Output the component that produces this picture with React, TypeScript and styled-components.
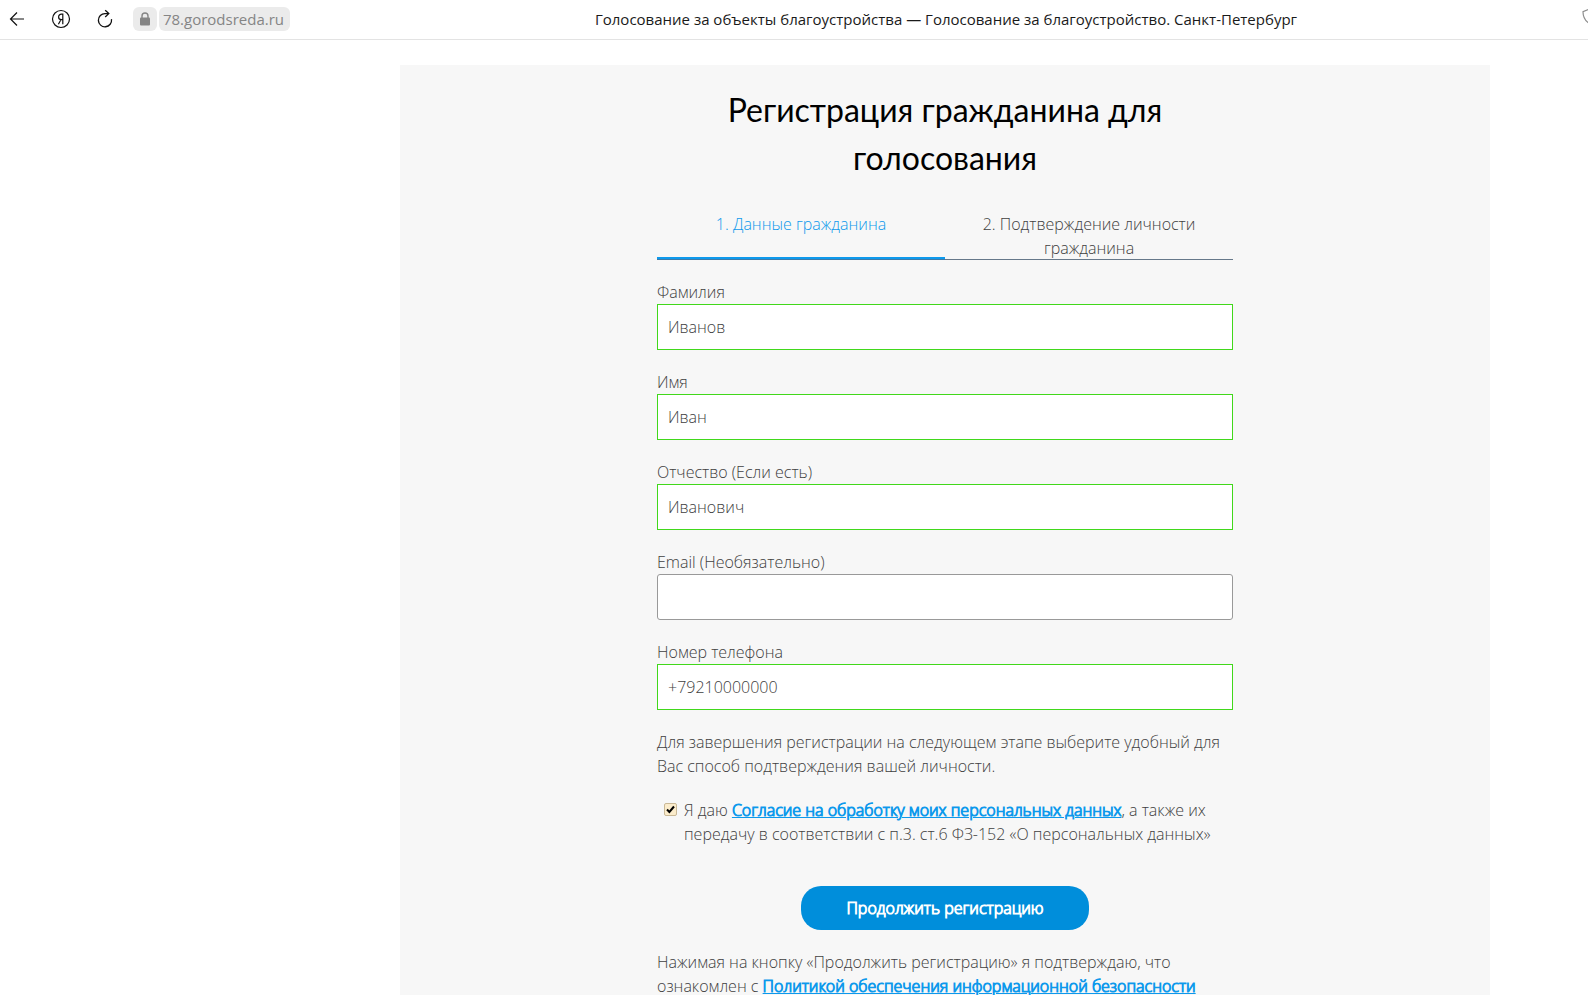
import React, { useState } from 'react';
import styled, { createGlobalStyle } from 'styled-components';

const GlobalStyle = createGlobalStyle`
  *, *::before, *::after { box-sizing: border-box; }
  body {
    margin: 0;
    background: #fff;
    color: #404040;
    font: 300 16px/24px "Open Sans", "Noto Sans", sans-serif;
  }
`;

const Page = styled.div`
  display: flex;
  flex-direction: column;
  height: 100vh;
`;

const Toolbar = styled.header`
  display: flex;
  align-items: center;
  flex: none;
  height: 40px;
  padding-left: 4px;
  padding-bottom: 1px;
  border-bottom: 1px solid #e3e3e3;
`;

const NavButtons = styled.nav`
  display: flex;
  gap: 18px;
`;

const IconButton = styled.button`
  display: flex;
  align-items: center;
  justify-content: center;
  width: 26px;
  height: 26px;
  padding: 0;
  border: 0;
  background: none;
  color: #111;
`;

const Address = styled.div`
  display: flex;
  gap: 2px;
  margin-left: 15px;
`;

const LockChip = styled.button`
  display: flex;
  align-items: center;
  justify-content: center;
  width: 24px;
  height: 24px;
  padding: 0;
  border: 0;
  border-radius: 6px;
  background: #ebebeb;
  color: #858585;
`;

const UrlChip = styled.button`
  width: 131px;
  height: 24px;
  padding: 0 2px 0 0;
  border: 0;
  border-radius: 6px;
  background: #ebebeb;
  color: #858585;
  font: 400 15px/24px "Open Sans", "Noto Sans", sans-serif;
`;

const PageTitle = styled.div`
  flex: 1;
  margin-left: 20px;
  color: #1a1a1a;
  font-size: 15px;
  font-weight: 400;
  text-align: center;
  white-space: nowrap;
`;

const ShieldEdge = styled.div`
  flex: none;
  width: 6px;
  height: 24px;
  overflow: hidden;
  color: #8c8c8c;

  svg {
    display: block;
  }
`;

const Content = styled.div`
  flex: 1;
  min-height: 0;
  overflow-y: auto;
  scrollbar-width: none;
  padding: 25px 98px 0 400px;
`;

const Panel = styled.main`
  min-height: 100%;
  padding: 21px 20px 40px;
  background: #f7f7f7;
`;

const Form = styled.form`
  display: flex;
  flex-direction: column;
  gap: 20px;
  max-width: 576px;
  margin: 0 auto;
`;

const Heading = styled.h1`
  margin: 0 0 10px;
  color: #000;
  font: 400 32px/48px Lato, sans-serif;
  text-align: center;
`;

const Steps = styled.ol`
  display: flex;
  margin: 0;
  padding: 0;
  list-style: none;
  box-shadow: inset 0 -1px #66788a;
`;

const Step = styled.li<{ $active?: boolean }>`
  flex: 1;
  padding: 0 30px;
  color: ${p => (p.$active ? '#0d99ec' : '#404040')};
  text-align: center;
  box-shadow: ${p => (p.$active ? 'inset 0 -1px #3c7ba8, inset 0 -3px #0d99ec' : 'none')};
`;

const Field = styled.label`
  display: block;
`;

const TextInput = styled.input<{ $valid?: boolean }>`
  display: block;
  width: 100%;
  height: 46px;
  padding: 0 10px;
  border: 1px solid ${p => (p.$valid ? '#41d81b' : '#999')};
  border-radius: ${p => (p.$valid ? 0 : 3)}px;
  outline: 0;
  background: #fff;
  color: #404040;
  font: inherit;
`;

const Text = styled.p`
  margin: 0;
`;

const Consent = styled.div`
  display: flex;
  gap: 7px;
  padding-left: 7px;
`;

const Checkbox = styled.input`
  flex: none;
  appearance: none;
  width: 13px;
  height: 13px;
  margin: 5px 0 0;
  border: 1px solid #c9b896;
  border-radius: 2px;
  background: #fbeccb;

  &:checked {
    background: #fbeccb
      url("data:image/svg+xml,%3Csvg xmlns='http://www.w3.org/2000/svg' viewBox='0 0 11 11'%3E%3Cpath d='M2 5.5 4.4 8 9 2.5' fill='none' stroke='%23000' stroke-width='2'/%3E%3C/svg%3E");
  }
`;

const Link = styled.a`
  color: #0d99ec;
  text-decoration: underline;
  -webkit-text-stroke: 1px;
`;

const Submit = styled.button`
  align-self: center;
  width: 50%;
  height: 44px;
  margin-top: 20px;
  border: 0;
  border-radius: 20px;
  background: #008edb;
  color: #fff;
  font: inherit;
  -webkit-text-stroke: 1px;
`;

const BackIcon = () => (
  <svg width="16" height="16" viewBox="0 0 16 16" fill="none" stroke="currentColor" strokeWidth="1.2">
    <path d="M15 8H1.5M8 1.5 1.5 8 8 14.5" />
  </svg>
);

const YandexIcon = () => (
  <svg width="20" height="20" viewBox="0 0 20 20" fill="none" stroke="currentColor">
    <circle cx="10" cy="10" r="8.5" strokeWidth="1.2" />
    <path d="M11.8 15.2V5.2H10.4C8.7 5.2 7.6 6.3 7.6 8S8.7 10.7 10.4 10.7H11.8M9.9 10.7 7.4 15.2" strokeWidth="1.2" />
  </svg>
);

const ReloadIcon = () => (
  <svg width="18" height="20" viewBox="0 0 18 20" fill="none" stroke="currentColor" strokeWidth="1.3">
    <path d="M15.5 10.2A6.6 6.6 0 1 1 9.2 4.6H12.4M9.2 1.2 12.8 4.6 9.2 8" />
  </svg>
);

const LockIcon = () => (
  <svg width="12" height="14" viewBox="0 0 12 14">
    <path d="M3 6.500V4A3 3 0 0 1 9 4V6.500" fill="none" stroke="currentColor" strokeWidth="1.4" />
    <rect x="1" y="5.500" width="10" height="8" rx="1" fill="currentColor" />
  </svg>
);

const ShieldIcon = () => (
  <svg width="18" height="20" viewBox="0 0 18 20" fill="none" stroke="currentColor" strokeWidth="1.2">
    <path d="M9 1.500 1 4.700C1 10.500 3 14.500 9 17.500 15 14.500 17 10.500 17 4.700Z" />
  </svg>
);

const initialFields = [
  { name: 'surname', label: 'Фамилия', value: 'Иванов', type: 'text' },
  { name: 'name', label: 'Имя', value: 'Иван', type: 'text' },
  { name: 'patronymic', label: 'Отчество (Если есть)', value: 'Иванович', type: 'text' },
  { name: 'email', label: 'Email (Необязательно)', value: '', type: 'email' },
  { name: 'phone', label: 'Номер телефона', value: '+79210000000', type: 'tel' },
];

export default function App() {
  const [fields, setFields] = useState(initialFields);
  const [agreed, setAgreed] = useState(true);

  const change = (name: string, value: string) =>
    setFields(fields.map(f => (f.name === name ? { ...f, value } : f)));

  return (
    <Page>
      <GlobalStyle />
      <Toolbar>
        <NavButtons>
          <IconButton aria-label="Назад"><BackIcon /></IconButton>
          <IconButton aria-label="Яндекс"><YandexIcon /></IconButton>
          <IconButton aria-label="Обновить"><ReloadIcon /></IconButton>
        </NavButtons>
        <Address>
          <LockChip aria-label="Защита"><LockIcon /></LockChip>
          <UrlChip>78.gorodsreda.ru</UrlChip>
        </Address>
        <PageTitle>
          Голосование за объекты благоустройства — Голосование за благоустройство. Санкт-Петербург
        </PageTitle>
        <ShieldEdge><ShieldIcon /></ShieldEdge>
      </Toolbar>
      <Content>
        <Panel>
          <Form onSubmit={e => e.preventDefault()}>
            <Heading>Регистрация гражданина для голосования</Heading>
            <Steps>
              <Step $active>1. Данные гражданина</Step>
              <Step>2. Подтверждение личности гражданина</Step>
            </Steps>
            {fields.map(f => (
              <Field key={f.name}>
                {f.label}
                <TextInput
                  name={f.name}
                  type={f.type}
                  value={f.value}
                  $valid={f.value !== ''}
                  onChange={e => change(f.name, e.target.value)}
                />
              </Field>
            ))}
            <Text>
              Для завершения регистрации на следующем этапе выберите удобный для Вас способ подтверждения вашей
              личности.
            </Text>
            <Consent>
              <Checkbox id="agree" type="checkbox" checked={agreed} onChange={e => setAgreed(e.target.checked)} />
              <label htmlFor="agree">
                Я даю <Link href="#consent">Согласие на обработку моих персональных данных</Link>, а также их
                передачу в соответствии с п.3. ст.6 ФЗ-152 «О персональных данных»
              </label>
            </Consent>
            <Submit type="submit">Продолжить регистрацию</Submit>
            <Text>
              Нажимая на кнопку «Продолжить регистрацию» я подтверждаю, что ознакомлен с{' '}
              <Link href="#policy">Политикой обеспечения информационной безопасности</Link>
            </Text>
          </Form>
        </Panel>
      </Content>
    </Page>
  );
}
